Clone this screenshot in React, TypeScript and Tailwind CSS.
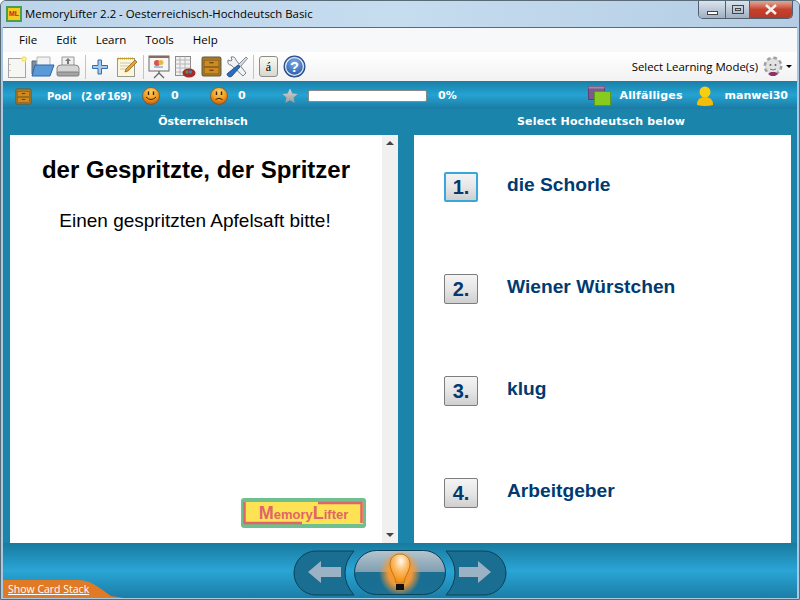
const sans = "font-['Liberation_Sans',Arial,sans-serif]";
const ui = "font-['Open_Sans','Noto_Sans',sans-serif]";
const label = "font-['DejaVu_Sans',Verdana,sans-serif] font-bold text-white";

function NewIcon() {
  return (
    <svg width="22" height="24" viewBox="0 0 22 24">
      <defs>
        <radialGradient id="spark">
          <stop offset=".3" stopColor="#fff6a8" />
          <stop offset="1" stopColor="#fff6a8" stopOpacity="0" />
        </radialGradient>
      </defs>
      <rect x="1.500" y="3.500" width="17" height="19" fill="#f6f6f2" stroke="#a4a4a4" />
      <path d="M3 9v1M3 15v1" stroke="#999" />
      <circle cx="17" cy="4" r="4.500" fill="url(#spark)" />
      <circle cx="17" cy="4" r="2" fill="none" stroke="#e8d860" />
    </svg>
  );
}
function OpenIcon() {
  return (
    <svg width="24" height="24" viewBox="0 0 24 24">
      <path d="M1 6h6l1-2h9v15H1z" fill="#7d8fa3" stroke="#55667a" />
      <path d="M6 2h13v9H6z" fill="#f2f2f2" stroke="#b5b5b5" />
      <path d="M1 21l3-11h19l-4 11z" fill="#5b9ad8" stroke="#2b66a8" />
    </svg>
  );
}
function PrintIcon() {
  return (
    <svg width="24" height="24" viewBox="0 0 24 24">
      <path d="M6 2h12v10H6z" fill="#eee" stroke="#999" />
      <path d="M12 3l3 3h-2v3h-2V6H9z" fill="#777" />
      <path d="M1 13q0-3 4-3h14q4 0 4 3v5H1z" fill="#d4d4d4" stroke="#8a8a8a" />
      <rect x="1" y="17" width="22" height="4" rx="1.500" fill="#a4a4a4" stroke="#7c7c7c" />
    </svg>
  );
}
function PlusIcon() {
  return (
    <svg width="18" height="18" viewBox="0 0 18 18">
      <path d="M7 2h3.500v5.500H16.500V10.500H10.500V16H7v-5.500H1.500V7.500H7z" fill="#a8c8ea" stroke="#2f6fb0" />
    </svg>
  );
}
function NoteIcon() {
  return (
    <svg width="22" height="22" viewBox="0 0 22 22">
      <rect x="1.500" y="2.500" width="17" height="18" fill="#fbf6dc" stroke="#9a9a8a" />
      <path d="M2 2.500h16" stroke="#c9a227" strokeWidth="2" strokeDasharray="1 1" />
      <path d="M4 7h11M4 10h9M4 13h6" stroke="#c8c8b0" />
      <path d="M9 16l1-3 9-9 2 2-9 9z" fill="#e8a030" stroke="#8a5a10" strokeWidth=".7" />
    </svg>
  );
}
function SlideIcon() {
  return (
    <svg width="22" height="24" viewBox="0 0 22 24">
      <rect x="1" y="1" width="20" height="15" fill="#f6f6f6" stroke="#6a6a6a" />
      <rect x="1" y="1" width="20" height="2" fill="#8a6a5c" />
      <circle cx="9" cy="8" r="3" fill="#d9534f" />
      <circle cx="13" cy="7.500" r="2.500" fill="#e8b840" />
      <path d="M6 12h9" stroke="#5a8ac0" />
      <path d="M11 16v2M11 18l-5 5M11 18l5 5" stroke="#666" strokeWidth="1.300" fill="none" />
    </svg>
  );
}
function TableIcon() {
  return (
    <svg width="22" height="24" viewBox="0 0 22 24">
      <rect x="1.500" y="1.500" width="15" height="19" fill="#f1f1f1" stroke="#8a8a8a" />
      <path d="M1.500 5h15M1.500 9h15M1.500 13h15M1.500 17h15M6 1.500v19M11 1.500v19" stroke="#b5b5b5" />
      <ellipse cx="15" cy="18" rx="6.500" ry="4.500" fill="#a52a2a" />
      <circle cx="13" cy="17" r="1.700" fill="#4a9a4a" />
      <circle cx="16.500" cy="17" r="1.700" fill="#4a7ac0" />
    </svg>
  );
}
function DrawerIcon({ size = 21 }: { size?: number }) {
  return (
    <svg width={size} height={size} viewBox="0 0 20 20">
      <rect x="1" y="1" width="18" height="18" rx="1.500" fill="#a87a28" stroke="#5f5a3a" />
      <rect x="3" y="4" width="14" height="6" fill="#d08a20" stroke="#7d5a1a" strokeWidth=".6" />
      <rect x="3" y="11" width="14" height="6" fill="#d08a20" stroke="#7d5a1a" strokeWidth=".6" />
      <path d="M8 6.500h4M8 13.500h4" stroke="#4a3510" />
    </svg>
  );
}
function ToolsIcon() {
  return (
    <svg width="24" height="24" viewBox="0 0 24 24">
      <path d="M3 5l3 1 1-1-1-3q4-1 5 3l10 13-3 3L6 10q-4 0-3-5z" fill="#f0f2f4" stroke="#6a7480" strokeWidth=".9" />
      <path d="M21 2l1.500 1.500-7 8-2-2z" fill="#d9dde2" stroke="#6a7480" strokeWidth=".8" />
      <path d="M13 10l2 2-8 9q-2 2-4 0t0-3z" fill="#2c6cc0" stroke="#1c4478" strokeWidth=".8" />
    </svg>
  );
}
function CharIcon() {
  return (
    <div className="flex h-[21px] w-[19px] items-center justify-center rounded-[3px] border border-[#8d8d85] bg-gradient-to-b from-[#fafaf5] to-[#d8d8d0] font-['Liberation_Serif',serif] text-[12px] text-black">
      á
    </div>
  );
}
function HelpIcon() {
  return (
    <svg width="23" height="23" viewBox="0 0 22 22">
      <defs>
        <radialGradient id="hlp" cx="50%" cy="35%" r="65%">
          <stop offset="0" stopColor="#7fb0ec" />
          <stop offset="1" stopColor="#1f4fa0" />
        </radialGradient>
      </defs>
      <circle cx="11" cy="11" r="10" fill="url(#hlp)" stroke="#2a4a88" />
      <circle cx="11" cy="11" r="8.500" fill="none" stroke="#dfe9f8" strokeWidth="1.200" />
      <text x="11" y="16" textAnchor="middle" fontSize="14" fontWeight="700" fill="#fff" fontFamily="Liberation Sans, sans-serif">?</text>
    </svg>
  );
}
function GearIcon() {
  return (
    <svg width="24" height="24" viewBox="0 0 24 24">
      <circle cx="12" cy="11" r="8" fill="#d6d6d6" stroke="#a0a0a0" strokeWidth="3" strokeDasharray="3.500 2.800" />
      <circle cx="12" cy="11" r="7" fill="#e2e2e2" />
      <circle cx="9.500" cy="10" r="1" fill="#666" />
      <circle cx="14.500" cy="10" r="1" fill="#666" />
      <path d="M9 14q3 2 6 0" stroke="#777" fill="none" />
      <path d="M7 19l3-2 4 0 3 2-3 2h-4z" fill="#8e3070" />
    </svg>
  );
}
function Face({ sad = false }: { sad?: boolean }) {
  const id = sad ? "fs" : "fh";
  return (
    <svg width="18" height="18" viewBox="0 0 18 18">
      <defs>
        <radialGradient id={id} cx="50%" cy="25%" r="75%">
          <stop offset="0" stopColor="#fdd060" />
          <stop offset=".6" stopColor="#f09a20" />
          <stop offset="1" stopColor="#c8580a" />
        </radialGradient>
      </defs>
      <circle cx="9" cy="9" r="8.500" fill={`url(#${id})`} stroke="#7a5020" strokeWidth=".7" />
      <path d="M6.500 4.500v3.500M11.500 4.500v3.500" stroke="#3a2208" strokeWidth="1.400" />
      {sad ? (
        <path d="M5.500 12.500q3.500-2.500 7 0" stroke="#3a2208" fill="none" />
      ) : (
        <path d="M4 10q5 5 10 0" stroke="#3a2208" fill="none" />
      )}
    </svg>
  );
}
function Star() {
  return (
    <svg width="16" height="16" viewBox="0 0 16 16">
      <defs>
        <linearGradient id="st" x1="0" y1="0" x2="0" y2="1">
          <stop offset="0" stopColor="#d8d8d8" />
          <stop offset="1" stopColor="#9a9a9a" />
        </linearGradient>
      </defs>
      <path d="M8 .5l2.300 5 5.200.6-3.900 3.500 1.100 5.400L8 12.200 3.300 15l1.100-5.400L.5 6.100l5.200-.6z" fill="url(#st)" />
    </svg>
  );
}
function FolderIcon() {
  return (
    <svg width="23" height="20" viewBox="0 0 23 20">
      <path d="M.5 .5h16v13H.5z" fill="#7a5a90" stroke="#5a4270" />
      <path d="M.5 .5h16v2H.5z" fill="#a08aa8" />
      <path d="M6.500 5.500h16v14h-16z" fill="#86cc20" stroke="#5a9a18" />
    </svg>
  );
}
function UserIcon() {
  return (
    <svg width="18" height="21" viewBox="0 0 18 21">
      <ellipse cx="9" cy="6" rx="5.500" ry="5.500" fill="#f8cf10" />
      <path d="M1 19q0-8 8-8t8 8q-8 2-16 0z" fill="#f6bd06" />
    </svg>
  );
}
function Bulb() {
  return (
    <svg width="44" height="46" viewBox="0 0 44 46">
      <defs>
        <radialGradient id="bglow">
          <stop offset=".55" stopColor="#ff9a30" stopOpacity=".95" />
          <stop offset="1" stopColor="#ff9a30" stopOpacity="0" />
        </radialGradient>
        <radialGradient id="bfill" cx="55%" cy="25%" r="70%">
          <stop offset="0" stopColor="#fffaf0" />
          <stop offset=".45" stopColor="#fdc070" />
          <stop offset="1" stopColor="#f59010" />
        </radialGradient>
      </defs>
      <ellipse cx="22" cy="23" rx="21" ry="23" fill="url(#bglow)" />
      <path d="M22 4c-6 0-10 4-10 10 0 7 5 11 6 19h8c1-8 6-12 6-19 0-6-4-10-10-10z" fill="url(#bfill)" stroke="#b87820" />
      <rect x="18" y="34" width="8" height="6" fill="#111" />
    </svg>
  );
}
function LeftShape() {
  return (
    <svg width="62" height="46" viewBox="0 0 62 46">
      <path d="M23 1h38q-9 10-9 22t9 22H23a22 22 0 0 1 0-44z" fill="#196e92" stroke="#0c4055" />
      <path d="M15 22l13-11v6h20v10H28v6z" fill="#9ab2c4" />
    </svg>
  );
}
function RightShape() {
  return (
    <svg width="62" height="46" viewBox="0 0 62 46">
      <path d="M39 1H1q9 10 9 22T1 45h38a22 22 0 0 0 0-44z" fill="#196e92" stroke="#0c4055" />
      <path d="M46 22L33 11v6H14v10h19v6z" fill="#9ab2c4" />
    </svg>
  );
}
function Sep({ className }: { className: string }) {
  return <div className={`h-[24px] w-px bg-[#c4c4c4] ${className}`} />;
}
function CaptionButtons() {
  return (
    <div className="mr-[6px] flex h-[18px] self-start overflow-hidden rounded-b-[5px] border border-t-0 border-[#50606e]">
      <div className="flex w-[26px] items-end justify-center bg-gradient-to-b from-[#dbe4ee] to-[#9fb0c2] pb-[3px]">
        <div className="h-[4px] w-[11px] border border-[#444] bg-white" />
      </div>
      <div className="flex w-[25px] items-center justify-center border-x border-[#50606e] bg-gradient-to-b from-[#dbe4ee] to-[#9fb0c2]">
        <div className="flex h-[9px] w-[12px] items-center justify-center border border-[#444]">
          <div className="h-[3px] w-[6px] border border-[#444]" />
        </div>
      </div>
      <div className="flex w-[42px] items-center justify-center bg-gradient-to-b from-[#dba898] via-[#c8402c] to-[#b23a28]">
        <svg width="16" height="11" viewBox="0 0 16 11">
          <path d="M3 1l10 9M13 1L3 10" stroke="#f4efe8" strokeWidth="2.600" />
        </svg>
      </div>
    </div>
  );
}
function Answer({ n, text, active = false }: { n: number; text: string; active?: boolean }) {
  return (
    <div className="flex h-[102px] items-start pl-[30px]">
      <div
        className={`flex h-[30px] w-[34px] items-center justify-center rounded-[2px] bg-gradient-to-b from-[#f4f4f4] via-[#e6e6e6] to-[#cfcfcf] text-[20px] font-bold text-[#003a70] ${sans} ${
          active ? "border-2 border-[#38a8dc]" : "border border-[#7d7d7d]"
        }`}
      >
        {n}.
      </div>
      <div className={`ml-[29px] mt-[1px] text-[19.2px] leading-[24px] font-bold text-[#003a70] ${sans}`}>{text}</div>
    </div>
  );
}

export default function App() {
  return (
    <div className="flex h-[600px] w-[800px] flex-col overflow-hidden rounded-t-[6px] border border-[#5a6b78] bg-[#a9c8e2] px-[2px] pb-[1px]">
      {/* title bar */}
      <div className="mx-[-2px] flex h-[26px] shrink-0 items-center justify-between bg-gradient-to-r from-[#bcd4ea] via-[#c6dcef] to-[#b4cde4]">
        <div className="flex items-center gap-[3px] pl-[5px]">
          <div className="flex h-[16px] w-[16px] items-center justify-center border-2 border-[#4aa04a] bg-[#f6c820] font-['Liberation_Sans',sans-serif] text-[7px] font-bold text-[#d02020]">
            ML
          </div>
          <span className={`text-[11.4px] text-black ${ui}`}>MemoryLifter 2.2 - Oesterreichisch-Hochdeutsch Basic</span>
        </div>
        <CaptionButtons />
      </div>

      {/* menu */}
      <div className={`flex h-[25px] shrink-0 items-center gap-[19px] border-t border-[#5a6a78] bg-[#f7f8f9] pl-[16px] text-[11.5px] text-black ${ui}`}>
        <span>File</span>
        <span>Edit</span>
        <span>Learn</span>
        <span>Tools</span>
        <span>Help</span>
      </div>

      {/* toolbar */}
      <div className="flex h-[29px] shrink-0 items-center justify-between bg-gradient-to-b from-white to-[#f2f2f2] pl-[4px] pr-[5px]">
        <div className="flex items-center">
          <NewIcon />
          <div className="ml-[2px]"><OpenIcon /></div>
          <div className="ml-[1px]"><PrintIcon /></div>
          <Sep className="ml-[5px]" />
          <div className="ml-[5px]"><PlusIcon /></div>
          <div className="ml-[7px]"><NoteIcon /></div>
          <Sep className="ml-[5px]" />
          <div className="ml-[4px]"><SlideIcon /></div>
          <div className="ml-[4px]"><TableIcon /></div>
          <div className="ml-[5px]"><DrawerIcon /></div>
          <div className="ml-[3px]"><ToolsIcon /></div>
          <Sep className="ml-[4px]" />
          <div className="ml-[5px]"><CharIcon /></div>
          <div className="ml-[5px]"><HelpIcon /></div>
        </div>
        <div className={`flex items-center gap-[1px] text-[11.4px] text-black ${ui}`}>
          <span className="mr-[2px]">Select Learning Mode(s)</span>
          <GearIcon />
          <div className="h-0 w-0 border-x-[3px] border-t-[3px] border-x-transparent border-t-black" />
        </div>
      </div>

      {/* status bar */}
      <div className="flex h-[28px] shrink-0 items-center bg-gradient-to-b from-[#1a7fa8] via-[#25a3d2] to-[#1a7ba3] pl-[12px] pr-[9px] pt-[2px] text-[11px]">
        <DrawerIcon size={17} />
        <span className={`ml-[15px] w-[24px] text-[10px] ${label}`}>Pool</span>
        <span className={`ml-[10px] w-[48px] text-[10px] tracking-[-0.3px] whitespace-nowrap [word-spacing:-1px] ${label}`}>(2 of 169)</span>
        <div className="ml-[13px]"><Face /></div>
        <span className={`ml-[11px] w-[39px] ${label}`}>0</span>
        <Face sad />
        <span className={`ml-[10px] w-[44px] ${label}`}>0</span>
        <Star />
        <div className="ml-[10px] h-[12px] w-[119px] rounded-[2px] border border-[#8a8a8a] bg-white" />
        <span className={`ml-[11px] ${label}`}>0%</span>
        <div className="ml-auto flex items-center">
          <FolderIcon />
          <span className={`ml-[8px] tracking-[0.15px] ${label}`}>Allfälliges</span>
          <div className="ml-[13px]"><UserIcon /></div>
          <span className={`ml-[11px] ${label}`}>manwei30</span>
        </div>
      </div>

      {/* card area */}
      <div className="flex min-h-0 flex-1 flex-col bg-[#1b84ab]">
        <div className="flex h-[26px] shrink-0 items-center">
          <div className={`w-[395px] pl-[5px] text-center text-[11px] ${label}`}>Österreichisch</div>
          <div className={`flex-1 pl-[7px] text-center text-[11px] tracking-[0.2px] ${label}`}>Select Hochdeutsch below</div>
        </div>
        <div className="flex h-[408px] shrink-0 pl-[7px] pr-[6px]">
          <div className="flex w-[388px] bg-white">
            <div className={`relative flex-1 text-center text-black ${sans}`}>
              <div className="mt-[21px] text-[24px] leading-[28px] font-bold">der Gespritzte, der Spritzer</div>
              <div className="mt-[25px] pr-[2px] text-[19px] leading-[24px]">Einen gespritzten Apfelsaft bitte!</div>
              <div className="absolute bottom-[15px] right-[16px] flex h-[30px] w-[125px] items-center justify-center">
                <svg className="absolute inset-0" width="125" height="30" viewBox="0 0 125 30">
                  <rect width="125" height="30" rx="3" fill="#6fbf8f" />
                  <rect x="3" y="4" width="119" height="22" fill="#fde254" />
                  <path d="M3.500 4V25H61M77 5H120.500V25" fill="none" stroke="#e0656a" strokeWidth="2.500" />
                </svg>
                <span className="relative text-[13px] font-bold text-[#e0656a]"><span className="text-[18px]">M</span>emory<span className="text-[18px]">L</span>ifter</span>
              </div>
            </div>
            <div className="flex w-[16px] flex-col items-center justify-between bg-[#f0f0f0] py-[6px]">
              <div className="h-0 w-0 border-x-[4px] border-b-[4px] border-x-transparent border-b-[#444]" />
              <div className="h-0 w-0 border-x-[4px] border-t-[4px] border-x-transparent border-t-[#444]" />
            </div>
          </div>
          <div className="ml-[16px] flex-1 bg-white pt-[37px]">
            <Answer n={1} text="die Schorle" active />
            <Answer n={2} text="Wiener Würstchen" />
            <Answer n={3} text="klug" />
            <Answer n={4} text="Arbeitgeber" />
          </div>
        </div>

        {/* bottom bar */}
        <div className="relative flex flex-1 items-center justify-center bg-gradient-to-b from-[#187a9f] via-[#2aa5d5] to-[#1a7ea6] pt-[4px]">
          <LeftShape />
          <div className="mx-[-1px] flex h-[45px] w-[92px] items-center justify-center overflow-hidden rounded-full border border-[#0c4055] bg-[linear-gradient(#b4c4ce,#7f9db0_50%,#196e92_50%,#1a7095)]">
            <Bulb />
          </div>
          <RightShape />
          <div className="absolute bottom-0 left-0">
            <svg className="block" width="121" height="20" viewBox="0 0 121 20">
              <path d="M0 2h74q10 0 18 5t16 11l13 2H0z" fill="#e07a25" />
            </svg>
            <span className={`absolute left-[5px] top-[4px] text-[10.5px] whitespace-nowrap text-white underline ${ui}`}>Show Card Stack</span>
          </div>
        </div>
      </div>
    </div>
  );
}
